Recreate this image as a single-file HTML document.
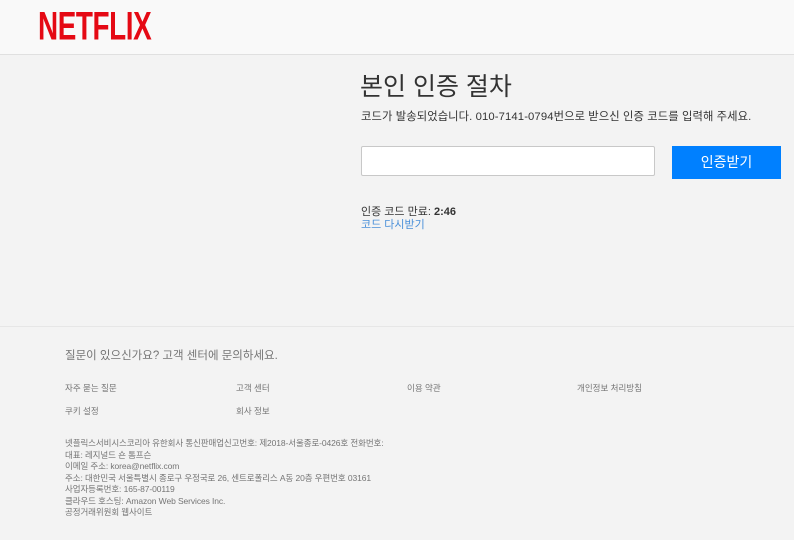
<!DOCTYPE html>
<html><head><meta charset="utf-8"><style>
*{margin:0;padding:0;box-sizing:border-box}
body{width:794px;height:540px;overflow:hidden;background:#f3f3f3;font-family:"Liberation Sans","Noto Sans CJK KR",sans-serif;position:relative}
.hdr{position:absolute;left:0;top:0;width:794px;height:55px;background:#f9f9f9;border-bottom:1px solid #e0e0e0}
.logo{position:absolute;left:38px;top:4px;color:#e50914;font-weight:bold;font-size:34px;transform:scale(0.82,1.18);transform-origin:top left;letter-spacing:-0.5px}
.a{position:absolute;white-space:nowrap}
.ft{position:absolute;left:0;top:326px;width:794px;height:214px;border-top:1px solid #e6e6e6}
</style></head><body>
<div class="hdr"><div class="logo">NETFLIX</div></div>
<div class="a" style="left:360px;top:67px;font-size:25px;color:#333">본인 인증 절차</div>
<div class="a" style="left:361px;top:108px;font-size:11.3px;color:#333;letter-spacing:0.1px">코드가 발송되었습니다. 010-7141-0794번으로 받으신 인증 코드를 입력해 주세요.</div>
<div class="a" style="left:361px;top:146px;width:294px;height:30px;background:#fff;border:1px solid #c8c8c8;border-radius:2px"></div>
<div class="a" style="left:672px;top:146px;width:109px;height:33px;background:#0080ff;color:#fff;font-size:14px;text-align:center;line-height:33px">인증받기</div>
<div class="a" style="left:361px;top:203px;font-size:11px;color:#333">인증 코드 만료: <b>2:46</b></div>
<div class="a" style="left:361px;top:216px;font-size:11px;color:#4a90d9">코드 다시받기</div>
<div class="ft"></div>
<div class="a" style="left:65px;top:347px;font-size:11.5px;color:#757575">질문이 있으신가요? 고객 센터에 문의하세요.</div>
<div class="a" style="left:65px;top:382px;font-size:8.5px;color:#757575">자주 묻는 질문</div>
<div class="a" style="left:236px;top:382px;font-size:8.5px;color:#757575">고객 센터</div>
<div class="a" style="left:407px;top:382px;font-size:8.5px;color:#757575">이용 약관</div>
<div class="a" style="left:577px;top:382px;font-size:8.5px;color:#757575">개인정보 처리방침</div>
<div class="a" style="left:65px;top:405px;font-size:8.5px;color:#757575">쿠키 설정</div>
<div class="a" style="left:236px;top:405px;font-size:8.5px;color:#757575">회사 정보</div>
<div class="a" style="left:65px;top:438px;font-size:8.5px;line-height:11.5px;color:#757575;letter-spacing:-0.1px">넷플릭스서비시스코리아 유한회사 통신판매업신고번호: 제2018-서울종로-0426호 전화번호:<br>대표: 레지널드 숀 톰프슨<br>이메일 주소: korea@netflix.com<br>주소: 대한민국 서울특별시 종로구 우정국로 26, 센트로폴리스 A동 20층 우편번호 03161<br>사업자등록번호: 165-87-00119<br>클라우드 호스팅: Amazon Web Services Inc.<br>공정거래위원회 웹사이트</div>
</body></html>
